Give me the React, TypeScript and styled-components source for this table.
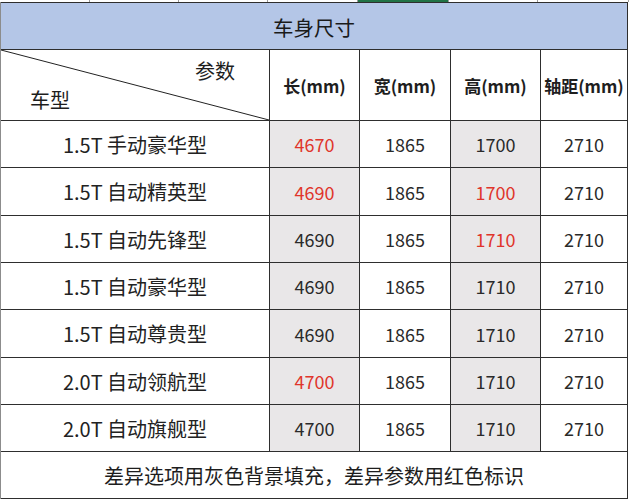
import React from "react";
import styled, { createGlobalStyle } from "styled-components";

const GlobalStyle = createGlobalStyle`
  html, body {
    margin: 0;
    padding: 0;
    background: #fff;
  }
  body {
    font-family: "Noto Sans CJK SC", "Noto Sans", sans-serif;
    color: #222;
  }
`;

type Key = "len" | "wid" | "hgt" | "base";

const COLUMNS: { key: Key; label: string; shaded: boolean }[] = [
  { key: "len", label: "长(mm)", shaded: true },
  { key: "wid", label: "宽(mm)", shaded: false },
  { key: "hgt", label: "高(mm)", shaded: true },
  { key: "base", label: "轴距(mm)", shaded: false },
];

const ROWS: { name: string; values: Record<Key, string>; red: Key[] }[] = [
  { name: "1.5T 手动豪华型", values: { len: "4670", wid: "1865", hgt: "1700", base: "2710" }, red: ["len"] },
  { name: "1.5T 自动精英型", values: { len: "4690", wid: "1865", hgt: "1700", base: "2710" }, red: ["len", "hgt"] },
  { name: "1.5T 自动先锋型", values: { len: "4690", wid: "1865", hgt: "1710", base: "2710" }, red: ["hgt"] },
  { name: "1.5T 自动豪华型", values: { len: "4690", wid: "1865", hgt: "1710", base: "2710" }, red: [] },
  { name: "1.5T 自动尊贵型", values: { len: "4690", wid: "1865", hgt: "1710", base: "2710" }, red: [] },
  { name: "2.0T 自动领航型", values: { len: "4700", wid: "1865", hgt: "1710", base: "2710" }, red: ["len"] },
  { name: "2.0T 自动旗舰型", values: { len: "4700", wid: "1865", hgt: "1710", base: "2710" }, red: [] },
];

// excel column strip peeking in above the table
const STRIP = [90, 89, 89, 90, 91, 89, 91];

const App = () => {
  return (
    <>
      <GlobalStyle />
      <Strip>
        {STRIP.map((w, i) => (
          <StripCell key={i} $active={i === 4} style={{ width: w }} />
        ))}
      </Strip>
      <Sheet>
        <Title>车身尺寸</Title>
        <DiagCell>
          <DiagLine viewBox="0 0 100 100" preserveAspectRatio="none">
            <line x1="0" y1="0" x2="100" y2="100" stroke="#222" strokeWidth="1" vectorEffect="non-scaling-stroke" />
          </DiagLine>
          <ParamLabel>参数</ParamLabel>
          <ModelLabel>车型</ModelLabel>
        </DiagCell>
        {COLUMNS.map((c) => (
          <HeadCell key={c.key}>{c.label}</HeadCell>
        ))}
        {ROWS.map((r) => (
          <React.Fragment key={r.name}>
            <NameCell>{r.name}</NameCell>
            {COLUMNS.map((c) => (
              <ValueCell key={c.key} $shaded={c.shaded} $red={r.red.includes(c.key)}>
                {r.values[c.key]}
              </ValueCell>
            ))}
          </React.Fragment>
        ))}
        <Footer>差异选项用灰色背景填充，差异参数用红色标识</Footer>
      </Sheet>
    </>
  );
};

const Strip = styled.div`
  display: flex;
  height: 2px;
  overflow: hidden;
`;

const StripCell = styled.div<{ $active: boolean }>`
  flex-shrink: 0;
  box-sizing: border-box;
  height: 100%;
  background: ${({ $active }) => ($active ? "#217346" : "#fff")};
  border-right: 1px solid #9a9a9a;
`;

const Sheet = styled.div`
  display: grid;
  grid-template-columns: 268px 89px 90px 89px 86px;
  grid-template-rows: 46px 70px 46px 47px 46px 46px 47px 46px 46px 46px;
  gap: 1px;
  width: fit-content;
  background: #2e2e2e;
  border-left: 1px solid #8c8c8c;
  padding: 1px 1px 1px 0;
`;

const Cell = styled.div`
  display: flex;
  align-items: center;
  justify-content: center;
  background: #fff;
  white-space: nowrap;
`;

const Title = styled(Cell)`
  grid-column: 1 / -1;
  background: #b4c6e7;
  font-size: 20.5px;
  color: #1a1a1a;
  padding-top: 1px;
`;

const DiagCell = styled.div`
  position: relative;
  background: #fff;
`;

const DiagLine = styled.svg`
  position: absolute;
  inset: 0;
  width: 100%;
  height: 100%;
`;

const ParamLabel = styled.span`
  position: absolute;
  left: 194px;
  top: 6px;
  font-size: 20px;
  color: #1e1e1e;
`;

const ModelLabel = styled.span`
  position: absolute;
  left: 29px;
  top: 35px;
  font-size: 20px;
  color: #1e1e1e;
`;

const HeadCell = styled(Cell)`
  font-size: 17px;
  font-weight: 700;
  color: #1e1e1e;
`;

const NameCell = styled(Cell)`
  font-size: 20px;
  color: #222;
`;

const ValueCell = styled(Cell)<{ $shaded: boolean; $red: boolean }>`
  font-size: 18px;
  background: ${({ $shaded }) => ($shaded ? "#e9e7e8" : "#fff")};
  color: ${({ $red }) => ($red ? "#e0352b" : "#2a2a2a")};
`;

const Footer = styled(Cell)`
  grid-column: 1 / -1;
  font-size: 20px;
  color: #1e1e1e;
`;

export default App;
